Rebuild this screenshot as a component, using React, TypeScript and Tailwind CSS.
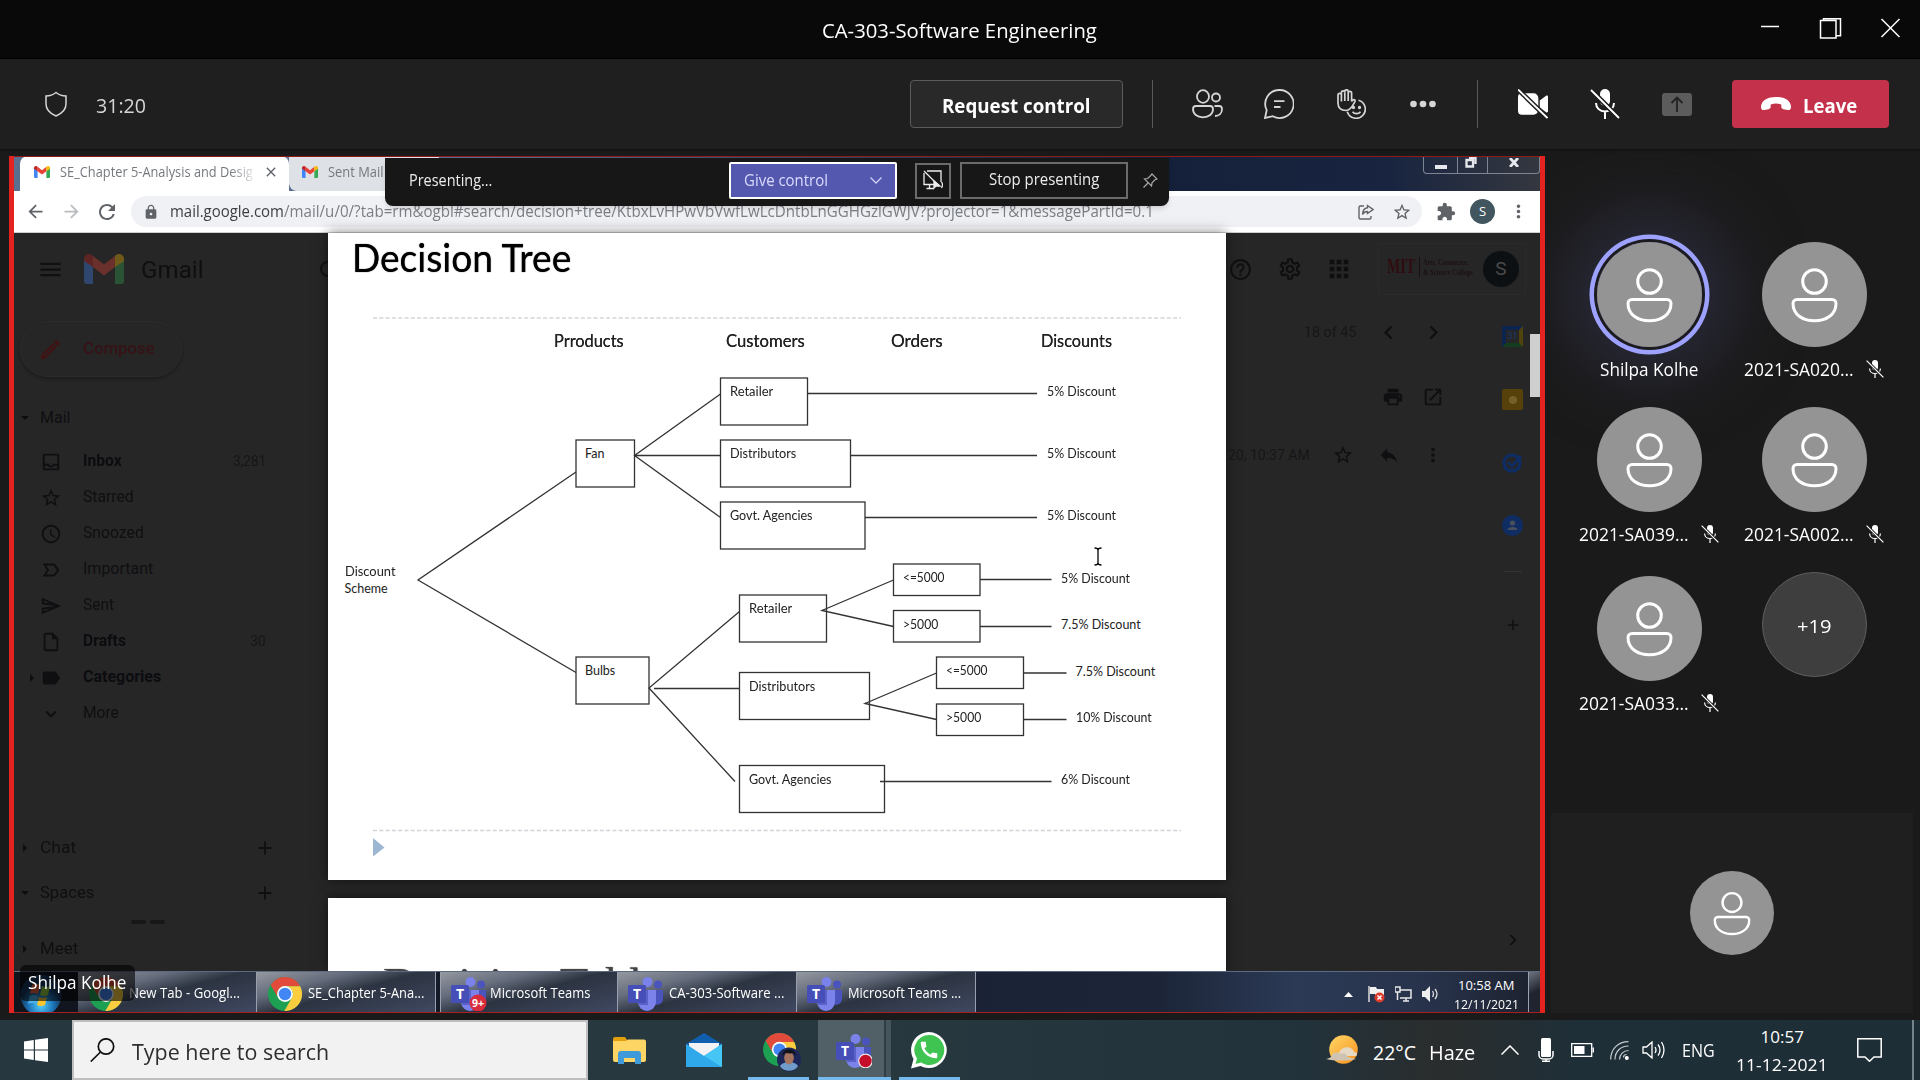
import { useLayoutEffect, useRef, useState } from "react";
import type { ReactNode } from "react";
import {
  MdAccessTime, MdAdd, MdApps, MdArrowBack, MdArrowForward, MdCall, MdChevronLeft, MdChevronRight, MdClose,
  MdExpandMore, MdExtension, MdHelpOutline, MdLabel, MdLabelImportantOutline, MdLock, MdMenu,
  MdMoreVert, MdOpenInNew, MdOutlineEdit, MdOutlineInbox, MdOutlineInsertDriveFile, MdOutlineSend, MdOutlineSettings,
  MdPrint, MdRefresh, MdReply, MdStarBorder,
} from "react-icons/md";

/* One line of text squeezed or stretched to an exact width. */
function Fit({ w, className = "", children }: { w: number; className?: string; children: ReactNode }) {
  const ref = useRef<HTMLSpanElement>(null);
  const [k, setK] = useState(1);
  useLayoutEffect(() => {
    if (ref.current && ref.current.offsetWidth) setK(w / ref.current.offsetWidth);
  }, [w]);
  return (
    <span className={`block shrink-0 text-left leading-[1.3] ${className}`} style={{ width: w }}>
      <span ref={ref} className="inline-block origin-left whitespace-nowrap" style={{ transform: `scaleX(${k})` }}>
        {children}
      </span>
    </span>
  );
}

function Person({ className }: { className: string }) {
  return (
    <svg viewBox="0 0 105 105" className={className} fill="none" stroke="#fff" strokeWidth="3">
      <circle cx="52.5" cy="52.5" r="52.5" fill="#949494" stroke="none" />
      <ellipse cx="52.5" cy="39.5" rx="11.8" ry="11.8" />
      <path d="M35 57.5h35a4 4 0 0 1 4 4c0 11-9.5 17.3-21.5 17.3S31 72.500 31 61.500a4 4 0 0 1 4-4z" />
    </svg>
  );
}

function MicOff({ className }: { className: string }) {
  return (
    <svg viewBox="0 0 30 30" className={className} fill="none" stroke="currentColor" strokeWidth="2">
      <path d="M10 5a5 5 0 0 1 10 0v7a5 5 0 0 1-10 0z" fill="currentColor" stroke="none" />
      <path d="M6 14c0 5 4 8.500 9 8.500s9-3.500 9-8.500M15 22.500V30" />
      <path d="M1 1l28 28" stroke="#1b1b1b" strokeWidth="5" />
      <path d="M1 1l28 28" />
    </svg>
  );
}

function Chrome({ className }: { className: string }) {
  return (
    <svg viewBox="0 0 24 24" className={className}>
      <circle cx="12" cy="12" r="12" fill="#1ea053" />
      <path d="M1.900 5.600A12 12 0 0 1 22.700 6.500L12 6.500A5.500 5.500 0 0 0 7.200 14.750Z" fill="#e24b3b" />
      <path d="M22.700 6.500A12 12 0 0 1 11.500 24L16.760 14.750A5.500 5.500 0 0 0 12 6.500Z" fill="#fccd3f" />
      <circle cx="12" cy="12" r="5.600" fill="#fff" />
      <circle cx="12" cy="12" r="4.400" fill="#4285f4" />
    </svg>
  );
}

function Teams({ className, children }: { className: string; children?: ReactNode }) {
  return (
    <svg viewBox="0 0 36 34" className={className}>
      <circle cx="30" cy="7.500" r="4" fill="#4b53bc" />
      <path d="M24 13h11v9a6 6 0 0 1-11 3z" fill="#4b53bc" />
      <circle cx="19.500" cy="5" r="5" fill="#7b83eb" />
      <path d="M10 13h18v12a9 9 0 0 1-18 0z" fill="#7b83eb" />
      <path d="M10 13h10v15H11z" fill="#5a62c8" />
      <rect y="8" width="18" height="18" rx="1.500" fill="#464eb8" />
      <text x="9" y="22" textAnchor="middle" fontFamily="Open Sans, sans-serif" fontWeight="700" fontSize="14" fill="#fff">T</text>
      {children}
    </svg>
  );
}

function GmailM({ className }: { className: string }) {
  return (
    <svg viewBox="0 0 40 30" className={className}>
      <path d="M0 5l9 7v18H3a3 3 0 0 1-3-3z" fill="#4285f4" />
      <path d="M40 5l-9 7v18h6a3 3 0 0 0 3-3z" fill="#34a853" />
      <path d="M9 2l11 8.500L31 2v11l-11 8.500L9 13z" fill="#ea4335" />
      <path d="M31 2c4-4 9-1 9 3v2l-9 6z" fill="#fbbc04" />
      <path d="M9 2C5-2 0 1 0 5v2l9 6z" fill="#c5221f" />
    </svg>
  );
}

function TitleBar() {
  return (
    <div className="flex h-[59px] items-center border-b border-black bg-[#090909]">
      <div className="w-[822px]" />
      <Fit w={275} className="mt-[3px] text-[20px] text-white">CA-303-Software Engineering</Fit>
      <svg className="ml-[664px] h-[22px] w-[139px]" viewBox="0 0 139 22" fill="none" stroke="#fff" strokeWidth="1.5">
        <path d="M0 8.500h18" />
        <path d="M59.500 2.500h15.500v17.500h-15.500zM62.500 2.500V.8h17v17h-4" />
        <path d="M120.500 1l18 18M138.500 1l-18 18" />
      </svg>
    </div>
  );
}

function Toolbar() {
  return (
    <div className="flex h-[90px] items-center bg-[#1f1f1f] text-[#d6d6d6] shadow-[0_1px_3px_#0006]">
      <svg className="ml-[44px] h-[26px] w-[24px]" viewBox="0 0 24 26" fill="none" stroke="currentColor" strokeWidth="1.500">
        <path d="M12 1.500c3 2.400 6 3.400 10 3.500v8c0 6-4 9.500-10 12C6 22.500 2 19 2 13V5c4-.1 7-1.100 10-3.500z" />
      </svg>
      <Fit w={50} className="mt-1 ml-[28px] text-[20px]">31:20</Fit>
      <div className="ml-[764px] flex h-12 w-[213px] items-center justify-center rounded border border-[#5c5c5c] bg-[#292929] pt-[3px]">
        <Fit w={149} className="text-[20px] font-bold text-white">Request control</Fit>
      </div>
      <div className="ml-[29px] h-12 w-px bg-[#5a5a5a]" />
      <svg className="ml-[39px] h-[30px] w-[31px]" viewBox="0 0 31 30" fill="none" stroke="currentColor" strokeWidth="1.800">
        <ellipse cx="11" cy="7.500" rx="6" ry="6.300" />
        <ellipse cx="24" cy="8.500" rx="4" ry="4" />
        <path d="M4 17h14a3 3 0 0 1 3 3c0 5-4 8.300-10 8.300S1 25 1 20a3 3 0 0 1 3-3zM22.500 17H27a3 3 0 0 1 3 3c0 4.500-3 7-7 7" />
      </svg>
      <svg className="ml-[41px] h-[30px] w-[30px]" viewBox="0 0 30 30" fill="none" stroke="currentColor" strokeWidth="1.800">
        <path d="M15.300 1A14 14 0 1 1 8.800 27.200L1 29l1.700-7.800A14 14 0 0 1 15.300 1zM10 12.200h10.500M10 18h6.500" />
      </svg>
      <svg className="ml-[43px] h-[30px] w-[29px]" viewBox="0 0 29 30" fill="none" stroke="currentColor" strokeWidth="1.700">
        <path d="M1 14V6a1.700 1.700 0 0 1 3.400 0V3.500a1.700 1.700 0 0 1 3.400 0V2.500a1.700 1.700 0 0 1 3.400 0V4a1.700 1.700 0 0 1 3.400 0V12.500C15.500 10.500 18.500 9.500 18 12.500C16 15 15 21 9 21.500C4 21.500 1 19 1 14z" />
        <path d="M4.400 6v6.500M7.800 3.500v8.500M11.200 4v8" />
        <path d="M21.500 11.200A9.200 9.200 0 1 1 10.300 22.800" />
        <circle cx="16.500" cy="18.500" r=".8" fill="currentColor" /><circle cx="22.500" cy="18.500" r=".8" fill="currentColor" />
        <path d="M15.500 22.800c2 2.500 6 2.500 8 0" />
      </svg>
      <svg className="ml-[44px] h-[8px] w-[26px]" viewBox="0 0 26 8" fill="currentColor">
        <circle cx="3.500" cy="4" r="3.300" /><circle cx="13" cy="4" r="3.300" /><circle cx="22.500" cy="4" r="3.300" />
      </svg>
      <div className="ml-[41px] h-12 w-px bg-[#5a5a5a]" />
      <svg className="ml-[40px] h-[30px] w-[30px] text-white" viewBox="0 0 31 30">
        <path d="M4 4h12a5 5 0 0 1 5 5v12a5 5 0 0 1-5 5H4a4 4 0 0 1-4-4V8a4 4 0 0 1 4-4zM22.500 11.500L29 6.500c1-.6 2 0 2 1v15c0 1-1 1.600-2 1l-6.500-5z" fill="currentColor" />
        <path d="M0 0l31 30" stroke="#1f1f1f" strokeWidth="5" /><path d="M0 0l30.500 29.500" stroke="currentColor" strokeWidth="2" />
      </svg>
      <MicOff className="ml-[42px] h-[30px] w-[30px] text-white" />
      <svg className="ml-[42px] h-[23px] w-[30px]" viewBox="0 0 30 23">
        <rect width="30" height="23" rx="3" fill="#5c5c5c" />
        <path d="M15 19V5M9.500 10L15 4.500 20.500 10" fill="none" stroke="#232323" strokeWidth="1.800" />
      </svg>
      <div className="ml-[40px] flex h-12 w-[157px] items-center rounded bg-[#c4314b] pl-[29px]">
        <svg className="h-[14px] w-[30px]" viewBox="0 0 30 14">
          <path d="M0 9C1 3 7 0 15 0s14 3 15 9c.3 3-1 4.500-3.500 4l-4-.8c-1.500-.3-2.200-1.200-2.200-2.600V7.500c-3.500-1.200-7-1.200-10.600 0v2c0 1.500-.7 2.400-2.200 2.700l-4 .8C1 13.500-.3 12 0 9z" fill="#fff" />
        </svg>
        <Fit w={54} className="mt-1 ml-3 text-[20px] font-bold text-white">Leave</Fit>
      </div>
    </div>
  );
}

function PresentingBar() {
  return (
    <div className="absolute top-[2px] left-[371px] flex h-12 w-[784px] items-center rounded-b-lg bg-[#171717] pb-[3px] text-[#ececec] shadow-md">
      <Fit w={83} className="ml-6 text-[16px]">Presenting...</Fit>
      <div className="ml-[237px] flex h-[37px] w-[168px] items-center rounded-[2px] border-[2.500px] border-white bg-[#5558af]">
        <Fit w={84} className="ml-[13px] text-[15.500px] text-[#dadcff]">Give control</Fit>
        <svg className="ml-[42px] h-[7px] w-[12px]" viewBox="0 0 12 7" fill="none" stroke="#d0d2f5" strokeWidth="1.300"><path d="M.5.500L6 6l5.500-5.500" /></svg>
      </div>
      <div className="ml-[18px] flex h-9 w-9 items-center justify-center border-2 border-[#6b6b6b] pb-px">
        <svg className="h-[20px] w-[20px]" viewBox="0 0 20 20" fill="none" stroke="#eee" strokeWidth="1.300">
          <path d="M4 1h14v11M1 3v11.500h10M3.500 18.500H11M1 1l15 15M6.500 15v3.500M18.500 12q2 3 0 6" /><path d="M11 11v7l2-2h4z" fill="#eee" />
        </svg>
      </div>
      <div className="ml-[9px] flex h-[37px] w-[168px] items-center justify-center border-2 border-[#6b6b6b] pb-[2px]">
        <Fit w={110} className="text-[15.500px]">Stop presenting</Fit>
      </div>
      <svg className="ml-[15px] h-[15px] w-[15px]" viewBox="0 0 15 15" fill="none" stroke="#a8a8a8" strokeWidth="1.200">
        <path d="M9 1l5 5-2 .8-3 3-.5 3.200-7-7L4.700 5.500l3-3zM5 10l-4.500 4.500" />
      </svg>
    </div>
  );
}

function BrowserChrome() {
  return (
    <>
      <div className="flex h-[35px] bg-[linear-gradient(90deg,#5a6f8f_0,#5a6f8f_30%,#14203a_74%,#17233d_82%,#182440_90%,#34373f_100%)]">
        <div className="ml-[6px] flex w-[269px] items-center rounded-t-lg bg-white pb-[3px]">
          <GmailM className="ml-[14px] h-[12px] w-[16px]" />
          <div className="ml-[10px] [mask-image:linear-gradient(90deg,#000_88%,#0003)]">
            <Fit w={193} className="text-[15px] text-[#75797f]">SE_Chapter 5-Analysis and Desig</Fit>
          </div>
          <MdClose className="ml-[10px] text-[16px] text-[#5f6368]" />
        </div>
        <div className="flex w-[150px] items-center rounded-bl-lg bg-[#dee1e6] pb-[3px]">
          <GmailM className="ml-[13px] h-[12px] w-[16px]" />
          <Fit w={56} className="ml-[10px] text-[15px] text-[#75797f]">Sent Mail</Fit>
        </div>
        <div className="ml-auto flex h-[18px] w-[117px] rounded-b border border-t-0 border-[#7d8494] text-white">
          <div className="flex w-[34px] items-center justify-center border-r border-[#7d8494]"><div className="mt-1 h-1 w-3 bg-[#e6e8ee]" /></div>
          <div className="flex w-[30px] items-start justify-center border-r border-[#7d8494]">
            <svg className="mr-1 h-3 w-3" viewBox="0 0 12 12" fill="none" stroke="#e6e8ee" strokeWidth="2.300"><path d="M1.500 4h6.500v6.500H1.500zM4 1.500h6.500v6.500" /></svg>
          </div>
          <div className="flex flex-1 items-center justify-center pb-1">
            <svg className="h-[9px] w-[10px]" viewBox="0 0 10 9" stroke="#e6e8ee" strokeWidth="2.800"><path d="M1 0l8 9M9 0L1 9" /></svg>
          </div>
        </div>
      </div>
      <div className="flex h-[42px] items-center border-b border-[#cfcfd2] bg-white text-[#5f6368]">
        <MdArrowBack className="ml-[11px] text-[21px]" />
        <MdArrowForward className="ml-[15px] text-[21px] text-[#b9bbbe]" />
        <MdRefresh className="ml-[13px] text-[24px]" />
        <div className="ml-[12px] flex h-[31px] w-[1291px] items-center rounded-full bg-[#f0f1f4]">
          <MdLock className="ml-[12px] text-[16px]" />
          <Fit w={114} className="ml-[11px] text-[16px] text-[#3b3e43]">mail.google.com</Fit>
          <Fit w={870} className="text-[16px] text-[#7b7f85]">/mail/u/0/?tab=rm&amp;ogbl#search/decision+tree/KtbxLvHPwVbVwfLwLcDntbLnGGHGzlGWJV?projector=1&amp;messagePartId=0.1</Fit>
          <svg className="ml-[204px] h-4 w-4" viewBox="0 0 16 16" fill="none" stroke="currentColor" strokeWidth="1.400">
            <path d="M6 2H2.500A1.500 1.500 0 0 0 1 3.500v10A1.500 1.500 0 0 0 2.500 15h9a1.500 1.500 0 0 0 1.500-1.500V12M9.500 1.500l5.500 4-5.500 4V7.500c-2.500 0-4 1-5 3 .2-4 2-6.400 5-6.700z" />
          </svg>
          <MdStarBorder className="ml-[18px] text-[20px]" />
        </div>
        <MdExtension className="ml-[14px] text-[20px]" />
        <div className="ml-[14px] flex size-[25px] items-center justify-center rounded-full bg-[#41565f] text-[13px] text-white">S</div>
        <MdMoreVert className="ml-[13px] text-[21px]" />
      </div>
    </>
  );
}

const folders: { label: string; w: number; icon: ReactNode; bold?: boolean; count?: string; cw?: number; arrow?: boolean }[] = [
  { label: "Inbox", w: 39, icon: <MdOutlineInbox />, bold: true, count: "3,281", cw: 33 },
  { label: "Starred", w: 51, icon: <MdStarBorder /> },
  { label: "Snoozed", w: 61, icon: <MdAccessTime /> },
  { label: "Important", w: 70, icon: <MdLabelImportantOutline /> },
  { label: "Sent", w: 31, icon: <MdOutlineSend /> },
  { label: "Drafts", w: 43, icon: <MdOutlineInsertDriveFile />, bold: true, count: "30", cw: 16 },
  { label: "Categories", w: 78, icon: <MdLabel />, bold: true, arrow: true },
  { label: "More", w: 36, icon: <MdExpandMore /> },
];

function Caret({ down = false, className = "" }: { down?: boolean; className?: string }) {
  return (
    <svg className={`h-2 w-2 shrink-0 ${className}`} viewBox="0 0 8 8" fill="#0d0d0f">
      <path d={down ? "M0 2h8L4 6z" : "M2 0v8l4-4z"} />
    </svg>
  );
}

function Section({ label, w, down, plus, className }: { label: string; w: number; down?: boolean; plus?: boolean; className: string }) {
  return (
    <div className={`flex items-center ${className}`}>
      <Caret down={down} className="ml-[7px]" />
      <Fit w={w} className="ml-[11px] text-[16px] text-[#0f0f12]">{label}</Fit>
      {plus && <MdAdd className="mr-[52px] ml-auto text-[22px] text-[#0f0f12]" />}
    </div>
  );
}

function GmailLeft() {
  return (
    <div className="flex w-[314px] flex-col overflow-hidden [font-family:Roboto,sans-serif]">
      <div className="flex h-[72px] items-center">
        <MdMenu className="ml-[23px] text-[27px] text-[#101012]" />
        <GmailM className="ml-[20px] h-[30px] w-[40px] opacity-35" />
        <Fit w={63} className="mt-[3px] ml-[17px] text-[23px] text-[#0f0f11]">Gmail</Fit>
        <div className="ml-auto size-4 translate-x-2 rounded-full border-2 border-[#111]" />
      </div>
      <div className="mt-4 ml-[6px] flex h-14 w-[162px] items-center rounded-full border border-[#2b2b2b] shadow-[0_2px_3px_#1c1c1c]">
        <MdOutlineEdit className="ml-[17px] text-[25px] text-[#421213]" />
        <Fit w={71} className="ml-[20px] text-[16px] font-medium text-[#371216]">Compose</Fit>
      </div>
      <Section label="Mail" w={30} down className="mt-[23px] h-9" />
      <div className="mt-[7px]">
        {folders.map((f) => (
          <div key={f.label} className="flex h-9 items-center pt-px text-[#0f0f12]">
            <div className="flex w-[26px] justify-end pr-1">{f.arrow && <Caret />}</div>
            <div className="w-[43px] text-[22px]">{f.icon}</div>
            <Fit w={f.w} className={f.bold ? "text-[16px] font-bold text-[#0c0c10]" : "text-[16px]"}>{f.label}</Fit>
            {f.count && <Fit w={f.cw ?? 20} className="mr-[62px] ml-auto text-[14px] text-[#161618]">{f.count}</Fit>}
          </div>
        ))}
      </div>
      <Section label="Chat" w={36} plus className="mt-[95px] h-11" />
      <Section label="Spaces" w={54} down plus className="h-[46px]" />
      <div className="flex h-[11px] items-center gap-1 pl-[117px]">
        <div className="h-1 w-[15px] rounded-full bg-[#171717]" /><div className="h-1 w-[15px] rounded-full bg-[#171717]" />
      </div>
      <Section label="Meet" w={38} className="h-11" />
    </div>
  );
}

function GmailRight() {
  return (
    <div className="relative flex w-[314px] flex-col overflow-hidden text-[#0f0f11] [font-family:Roboto,sans-serif]">
      <div className="flex h-[72px] items-center">
        <MdHelpOutline className="ml-[2px] text-[25px]" />
        <MdOutlineSettings className="ml-[24px] text-[26px]" />
        <MdApps className="ml-[22px] text-[28px]" />
        <div className="ml-[25px] flex h-[52px] w-[148px] items-center border border-[#2a2a2a]">
          <Fit w={28} className="mb-1 ml-2 [font-family:'Liberation_Serif',serif] text-[21px] font-bold text-[#2f0c10]">MIT</Fit>
          <div className="mb-1 ml-[4px] border-l border-[#1a1012] pl-[3px] [font-family:'Liberation_Serif',serif] text-[#1e1012]">
            <Fit w={46} className="text-[9px] leading-[10px] font-bold">Arts, Commerce,</Fit>
            <Fit w={50} className="text-[9px] leading-[10px] font-bold">&amp; Science College</Fit>
          </div>
          <div className="ml-[10px] flex size-[36px] items-center justify-center rounded-full bg-[#0d1013] text-[19px] text-[#4a4a4a]">S</div>
        </div>
      </div>
      <div className="flex">
        <div className="w-[260px]">
          <div className="flex h-[54px] items-center">
            <Fit w={52} className="ml-[78px] text-[14px] text-[#161618]">18 of 45</Fit>
            <MdChevronLeft className="ml-[19px] text-[27px]" />
            <MdChevronRight className="ml-[18px] text-[27px]" />
          </div>
          <div className="flex h-[76px] items-center">
            <MdPrint className="ml-[156px] text-[22px]" />
            <MdOpenInNew className="ml-[18px] text-[22px]" />
          </div>
          <div className="flex h-[40px] items-center">
            <Fit w={82} className="ml-[2px] text-[14px] text-[#161618]">20, 10:37 AM</Fit>
            <MdStarBorder className="ml-[22px] text-[22px]" />
            <MdReply className="ml-[24px] text-[22px]" />
            <MdMoreVert className="ml-[22px] text-[22px]" />
          </div>
        </div>
        <div className="flex w-[53px] flex-col items-center">
          <div className="mt-[21px] flex h-[21px] w-[21px] items-center justify-center border-4 border-[#0d2350] border-b-[#143c1e] border-r-[#51430e] text-[9px] text-[#1b3a78]">31</div>
          <div className="mt-[42px] flex size-[21px] items-center justify-center rounded-[2px] bg-[#554109]"><div className="size-2 rounded-full bg-[#775f2c]" /></div>
          <svg className="mt-[42px] size-[21px]" viewBox="0 0 21 21" fill="none" stroke="#0f2d63" strokeWidth="3.500"><circle cx="10" cy="11" r="8" /><path d="M6 10l4 4 9-10" strokeWidth="3" /></svg>
          <svg className="mt-[42px] size-[21px]" viewBox="0 0 21 21"><circle cx="10.500" cy="10.500" r="10.500" fill="#0f2d63" /><circle cx="10.500" cy="8" r="2.600" fill="#4a4f5c" /><path d="M5.500 15c0-4 10-4 10 0z" fill="#4a4f5c" /></svg>
          <div className="mt-[35px] h-px w-[18px] bg-[#333]" />
          <MdAdd className="mt-[44px] text-[18px]" />
          <MdChevronRight className="mt-[295px] text-[22px]" />
        </div>
      </div>
      <div className="absolute top-[101px] right-0 h-[63px] w-[10px] bg-[#cfcfcf]" />
    </div>
  );
}

/* Diagram coordinates are in screen pixels; the slide starts at (328, 233). */
const SX = 328;
const SY = 233;
const nodes: [string, number, number, number, number, number][] = [
  ["Retailer", 43.5, 720.500, 378, 87, 47],
  ["Distributors", 66, 720.500, 440, 130, 47],
  ["Govt. Agencies", 82.5, 720.500, 502, 144.500, 47],
  ["Fan", 19, 576, 440, 58.500, 47],
  ["Bulbs", 30, 576, 657, 73, 47],
  ["<=5000", 42, 893.500, 564, 86.500, 31.500],
  [">5000", 35, 893.500, 610.500, 86.500, 31.500],
  ["Retailer", 43.5, 739.500, 595, 87, 47],
  ["Distributors", 66, 739.500, 672.500, 130, 47],
  ["<=5000", 42, 936.500, 657, 87, 31.500],
  [">5000", 35, 936.500, 704, 87, 31.500],
  ["Govt. Agencies", 82.5, 739.500, 765.500, 145, 47],
];
const labels: [string, number, number, number][] = [
  ["5% Discount", 69.5, 1046.500, 391.500],
  ["5% Discount", 69.5, 1046.500, 453.500],
  ["5% Discount", 69.5, 1046.500, 515.500],
  ["5% Discount", 69.5, 1061, 578.500],
  ["7.5% Discount", 80, 1061, 624.500],
  ["7.5% Discount", 80, 1075.500, 671.500],
  ["10% Discount", 76, 1075.500, 717.500],
  ["6% Discount", 69.5, 1061, 779.500],
  ["Discount", 50.5, 344.500, 571.500],
  ["Scheme", 43, 344.500, 588.500],
];
const heads: [string, number, number][] = [
  ["Prroducts", 69.5, 554],
  ["Customers", 79, 726],
  ["Orders", 52, 891],
  ["Discounts", 71, 1040.500],
];
const links =
  "M576 472L418 580L576 672.500M720.500 394L634.500 455.500L720.500 517.500M634.500 455.500H720.500M807.500 393.500H1037M850.500 455.500H1037M865 517.500H1037" +
  "M739.500 611.500L649 688L735 781.500M654 688.500H739.500M893.500 580L822 610.500L893.500 626.500M936.500 673L865 703.500L936.500 719.500" +
  "M980 579.500H1051.500M980 626.500H1051.500M1023.500 673H1066.500M1023.500 719.500H1066.500M880 781.500H1051.500";

function Slide() {
  return (
    <div className="relative h-[647px] overflow-hidden bg-white text-[#222] shadow-[0_0_12px_#0008] [font-family:Lato,sans-serif]">
      <svg className="absolute inset-0 h-[647px] w-[898px]" viewBox="328 233 898 647" fill="none" stroke="#333" strokeWidth="1.300">
        <path d={links} />
        {nodes.map(([t, , x, y, w, h], i) => <rect key={t + i} x={x} y={y} width={w} height={h} />)}
        <path d="M373 318H1181M373 830.500H1181" stroke="#d3d3da" strokeDasharray="4 2.300" strokeWidth="1.700" />
        <path d="M373 838l11.500 9.500L373 856.500z" fill="#9db6d2" stroke="none" />
        <path d="M1094.500 548q3.500 0 3.500 2q0-2 3.500-2M1098 549.500v14M1094.500 565q3.500 0 3.500-2q0 2 3.500 2" stroke="#000" strokeWidth="1.300" />
      </svg>
      <div className="absolute top-0 left-[24px]"><Fit w={219} className="text-[38px] text-black [text-shadow:0_0_1px_#000]">Decision Tree</Fit></div>
      {heads.map(([t, w, x]) => (
        <div key={t} className="absolute top-[98px]" style={{ left: x - SX }}><Fit w={w} className="text-[16.500px] [text-shadow:0_0_.5px_#222]">{t}</Fit></div>
      ))}
      {nodes.map(([t, w, x, y], i) => (
        <div key={t + i} className="absolute" style={{ left: x - SX + 9, top: y - SY + 6 }}><Fit w={w} className="text-[12.500px]">{t}</Fit></div>
      ))}
      {labels.map(([t, w, x, y], i) => (
        <div key={t + i} className="absolute" style={{ left: x - SX, top: y - SY - 8 }}><Fit w={w} className="text-[12.500px]">{t}</Fit></div>
      ))}
    </div>
  );
}

const w7: { icon: "chrome" | "teams"; label: string; w: number; badge?: boolean; gap?: boolean }[] = [
  { icon: "chrome", label: "New Tab - Googl...", w: 111 },
  { icon: "chrome", label: "SE_Chapter 5-Ana...", w: 116 },
  { icon: "teams", label: "Microsoft Teams", w: 100, badge: true, gap: true },
  { icon: "teams", label: "CA-303-Software ...", w: 115 },
  { icon: "teams", label: "Microsoft Teams ...", w: 113 },
];

function RemoteTaskbar() {
  return (
    <div className="flex h-[42px] overflow-hidden border-t border-[#5d6a80] bg-[linear-gradient(90deg,#10141d_0,#1b2236_60%,#1c2538_75%,#2c3a56_84%,#27324a_93%,#1c212d_100%)] text-white">
      <svg className="mt-[2px] ml-[6px] h-[42px] w-[42px] shrink-0" viewBox="0 0 42 42">
        <defs><radialGradient id="orb" cy=".75"><stop offset="0" stopColor="#4fd0ff" /><stop offset=".6" stopColor="#1d74b8" /><stop offset="1" stopColor="#17395c" /></radialGradient></defs>
        <circle cx="21" cy="21" r="20.500" fill="url(#orb)" />
        <path d="M12 11q4-2 8 0l-2 9q-4-2-8 0z" fill="#e8603a" /><path d="M22 12q4 2 8 0l-2 9q-4 2-8 0z" fill="#93c83d" />
        <path d="M10 22q4-2 8 0l-2 8q-4-2-8 0z" fill="#4cb1ea" /><path d="M19 23q4 2 8 0l-2 8q-4 2-8 0z" fill="#fdc52e" />
      </svg>
      <div className="flex w-[914px] shrink-0 pl-4">
        {w7.map((b, i) => (
          <div key={i} className={`flex w-[179px] items-center border-r border-[#98a0b0] bg-[linear-gradient(165deg,#9498a0_0,#666d7c_28%,#2c3341_50%,#3f4961_100%)] pt-[2px] ${b.gap ? "ml-1 border-l" : ""}`}>
            {b.icon === "chrome" ? <Chrome className="ml-[11px] h-[34px] w-[34px] shrink-0" /> : (
              <Teams className="ml-[10px] h-[34px] w-[36px] shrink-0">
                {b.badge && (<><circle cx="27" cy="26" r="8.500" fill="#d92c3c" /><text x="27" y="30" textAnchor="middle" fontSize="10.500" fontWeight="700" fill="#fff" fontFamily="Open Sans, sans-serif">9+</text></>)}
              </Teams>
            )}
            <Fit w={b.w} className={b.icon === "chrome" ? "ml-[6px] text-[14px]" : b.badge ? "ml-[3px] text-[14px]" : "ml-[5px] text-[14px]"}>{b.label}</Fit>
          </div>
        ))}
      </div>
      <div className="ml-[368px] flex items-center pt-[3px]">
        <svg className="h-[5px] w-[9px]" viewBox="0 0 9 5"><path d="M4.500 0L9 5H0z" fill="#fff" /></svg>
        <svg className="ml-[15px] h-[18px] w-[17px]" viewBox="0 0 17 18"><path d="M1 1v16" stroke="#ddd" strokeWidth="1.500" /><path d="M2 2h6l1 2h7v7H8L7 9H2z" fill="#f0f0f0" /><circle cx="11.500" cy="12.500" r="5" fill="#dd3b2c" /><path d="M9.500 10.500l4 4m0-4l-4 4" stroke="#fff" strokeWidth="1.500" /></svg>
        <svg className="ml-[10px] h-[16px] w-[17px]" viewBox="0 0 17 16" fill="none" stroke="#e8e8e8" strokeWidth="1.500"><path d="M5 4h11v8H5M8 15h6M11 12v3M0 1h5v5H0zM2.500 6v8" /></svg>
        <svg className="ml-[10px] h-[16px] w-[17px]" viewBox="0 0 17 16"><path d="M0 5h3l5-5v16l-5-5H0z" fill="#eee" /><path d="M10.500 5q2 3 0 6M13 3q4 5 0 10" fill="none" stroke="#ddd" strokeWidth="1.300" /></svg>
      </div>
      <div className="ml-[14px] flex w-[66px] flex-col items-center pt-[4px]">
        <Fit w={56} className="text-[13px] leading-[19px]">10:58 AM</Fit>
        <Fit w={65} className="text-[13px] leading-[19px]">12/11/2021</Fit>
      </div>
      <div className="ml-auto w-[12px] border-l border-[#9aa3b3] bg-[linear-gradient(150deg,#6d737f,#20242e_50%)]" />
    </div>
  );
}

function SharedScreen() {
  return (
    <div className="relative mt-[7px] ml-[9px] flex h-[857px] w-[1536px] flex-col border-x-[5px] border-[#e32320]">
      <BrowserChrome />
      <div className="flex h-[738px] bg-[#262626]">
        <GmailLeft />
        <div className="flex w-[898px] flex-col gap-[18px]">
          <Slide />
          <div className="h-[73px] overflow-hidden bg-white pt-[58px] pl-[55px] shadow-[0_0_12px_#0008]">
            <Fit w={280} className="[font-family:'Liberation_Serif',serif] text-[42px] text-[#444] [text-shadow:0_0_1px_#444]">Decision Table</Fit>
          </div>
        </div>
        <GmailRight />
      </div>
      <RemoteTaskbar />
      <PresentingBar />
      <div className="absolute inset-x-0 top-0 h-px bg-[#8e1a1a]" />
      <div className="absolute inset-x-0 bottom-0 h-px bg-[#a81f22]" />
      <div className="absolute bottom-[12px] left-[6px] flex h-9 w-[115px] items-center rounded-md bg-black/60 pb-px pl-2">
        <Fit w={98} className="text-[17.500px] text-white">Shilpa Kolhe</Fit>
      </div>
    </div>
  );
}

function Participant({ name, speaking = false }: { name: string; speaking?: boolean }) {
  return (
    <div className="flex w-[165px] flex-col items-center">
      <div className={speaking ? "rounded-full shadow-[0_0_0_3px_#1b1b20,0_0_0_7.500px_#9ea2ff,0_0_70px_30px_#2b2b3c]" : "rounded-full"}>
        <Person className="h-[105px] w-[105px]" />
      </div>
      <div className="mt-[10px] mr-[2px] flex h-6 items-center justify-center gap-3 text-white">
        <Fit w={speaking ? 98 : 109.5} className="text-[17.500px]">{name}</Fit>
        {!speaking && <MicOff className="-mr-px h-[18px] w-[18px]" />}
      </div>
    </div>
  );
}

function Roster() {
  return (
    <div className="flex h-[871px] w-[375px] flex-col overflow-hidden">
      <div className="ml-[22px] flex pt-[93px]">
        <Participant name="Shilpa Kolhe" speaking />
        <Participant name="2021-SA020..." />
      </div>
      <div className="relative mt-[26px] ml-[22px] flex">
        <Participant name="2021-SA039..." />
        <Participant name="2021-SA002..." />
      </div>
      <div className="mt-[26px] ml-[22px] flex">
        <div className="mt-1"><Participant name="2021-SA033..." /></div>
        <div className="ml-[30px] flex size-[105px] items-center justify-center rounded-full border border-[#5e5e5e] bg-[#3e3e3e] pt-[3px]">
          <Fit w={35} className="text-[19px] text-white">+19</Fit>
        </div>
      </div>
      <div className="mt-auto mb-[7px] ml-[6px] flex h-[200px] w-[362px] items-center justify-center bg-[#1f1f1f]">
        <Person className="h-[84px] w-[84px]" />
      </div>
    </div>
  );
}

function Taskbar() {
  return (
    <div className="flex h-[60px] bg-[linear-gradient(90deg,#26373f_0,#28383f_45%,#22323b_68%,#2a2d2d_75%,#1f2f38_82%,#1e2e36_100%)] text-white">
      <div className="flex w-[72px] items-center justify-center">
        <svg className="h-6 w-6" viewBox="0 0 24 24" fill="#fff"><path d="M0 3.400l9.800-1.400v9.500H0zM11 1.800L24 0v11.500H11zM0 12.500h9.800V22L0 20.600zM11 12.500h13V24l-13-1.800z" /></svg>
      </div>
      <div className="flex w-[516px] items-center border-2 border-[#bfbfc1] bg-[#f2f2f2]">
        <svg className="ml-4 h-6 w-[25px]" viewBox="0 0 25 24" fill="none" stroke="#111" strokeWidth="1.700"><circle cx="16" cy="8.500" r="7.700" /><path d="M10.500 14L.8 23.500" /></svg>
        <Fit w={197} className="mt-[5px] ml-[17px] text-[21px] text-[#2d2d2d]">Type here to search</Fit>
      </div>
      <div className="flex w-[82px] items-center justify-center">
        <svg className="h-[27px] w-[33px]" viewBox="0 0 33 27"><path d="M0 2a2 2 0 0 1 2-2h10l3 4H0z" fill="#e29f0c" /><path d="M0 4h13l2-1.500h16a2 2 0 0 1 2 2V23a2 2 0 0 1-2 2H2a2 2 0 0 1-2-2z" fill="#fdd564" /><path d="M5 27V17a3 3 0 0 1 3-3h17a3 3 0 0 1 3 3v10h-6v-6H11v6z" fill="#3e9ad9" /></svg>
      </div>
      <div className="flex w-[68px] items-center justify-center">
        <svg className="h-[34px] w-[36px]" viewBox="0 0 36 34"><path d="M0 11L18 0l18 11v3H0z" fill="#0f5fae" /><path d="M3 10h30v9L18 24 3 19z" fill="#f2f2f4" /><path d="M0 11l18 12L36 11v23H0z" fill="#2fa9ea" /><path d="M36 11v23L12 19l6 4z" fill="#45c6f5" /></svg>
      </div>
      <div className="flex w-[80px] flex-col items-center justify-end">
        <svg className="mb-[5px] ml-[10px] h-[40px] w-[40px]" viewBox="0 0 40 40">
          <svg x="0" y="1" width="33" height="33" viewBox="0 0 24 24"><Chrome className="" /></svg>
          <circle cx="26" cy="27.500" r="12" fill="#1d2757" />
          <path d="M17 34.500c2-6 16-6 18 0a11.500 11.500 0 0 1-18 0z" fill="#6f9ccb" />
          <ellipse cx="26" cy="26" rx="4.800" ry="6.500" fill="#a5745e" />
          <path d="M19.500 24c-1-8 14-9 13 0l-2-3c-3 1-6 0-8.500 0z" fill="#10131c" />
        </svg>
        <div className="h-[3px] w-[61px] bg-[#76b9ed]" />
      </div>
      <div className="flex w-[73px] flex-col items-start justify-end bg-[linear-gradient(90deg,#516067_0,#516067_66px,#2f3e46_66px,#2f3e46_68px,#46545b_68px)]">
        <Teams className="mb-[9px] ml-[18px] h-[34px] w-[36px]"><circle cx="29.500" cy="27" r="6.800" fill="#c50f2a" stroke="#e8e8e8" strokeWidth="1.200" /></Teams>
        <div className="h-[3px] w-full bg-[#76b9ed]" />
      </div>
      <div className="flex w-[77px] flex-col items-center justify-end">
        <div className="relative mr-px mb-[8px] h-[37px] w-[36px]">
          <svg className="h-[37px] w-[36px]" viewBox="0 0 36 37"><path d="M18 0a18 18 0 1 1-8.500 34L0 36.500l2.500-9.500A18 18 0 0 1 18 0z" fill="#fff" /><path d="M18 3a15 15 0 1 1-8 27.500l-5.500 1.500 1.500-5.500A15 15 0 0 1 18 3z" fill="#3fc351" /></svg>
          <MdCall className="absolute top-[7px] left-[7px] text-[22px] text-white" />
        </div>
        <div className="h-[3px] w-[61px] bg-[#76b9ed]" />
      </div>
      <div className="ml-[358px] flex items-center">
        <svg className="h-[30px] w-[34px]" viewBox="0 0 34 30"><defs><linearGradient id="sun" x1="0" y1="0" x2="1" y2="1"><stop offset="0" stopColor="#ffd866" /><stop offset="1" stopColor="#f78f1e" /></linearGradient></defs><circle cx="17.500" cy="14.500" r="14.300" fill="url(#sun)" /><path d="M13 19c1-8 13-9 15-2 3 0 4 3 2 4H14z" fill="#e5d9c4" /><path d="M0 24c3-1 5-1 6-4 2-3 6-3 8-1 3-2 7 0 8 3 2 1 6 1 8 2-8 2-22 2-30 0z" fill="#cfc3b2" /></svg>
        <Fit w={43} className="mt-[5px] ml-[13px] text-[19.500px]">22°C</Fit>
        <Fit w={46} className="mt-[5px] ml-[13px] text-[19.500px]">Haze</Fit>
        <svg className="ml-[26px] h-[10px] w-[18px]" viewBox="0 0 18 10" fill="none" stroke="#fff" strokeWidth="1.500"><path d="M.5 9.500L9 1l8.500 8.500" /></svg>
        <svg className="ml-[19px] h-[24px] w-[16px]" viewBox="0 0 16 24" fill="none" stroke="#fff" strokeWidth="1.500"><rect x="3" y="0" width="10" height="19" rx="1.500" fill="#fff" stroke="none" /><path d="M1 13v4a4 4 0 0 0 4 4h6a4 4 0 0 0 4-4v-4M8 21v2M4 23.300h8" /></svg>
        <svg className="ml-[17px] h-[14px] w-[23px]" viewBox="0 0 23 14" fill="none" stroke="#fff" strokeWidth="1.300"><path d="M.7.700h20v12.600H.7zM22.300 4.500v5" /><rect x="3" y="3" width="10.500" height="8" fill="#fff" stroke="none" /></svg>
        <svg className="ml-[16px] h-[19px] w-[19px]" viewBox="0 0 19 19" fill="none" stroke="#fff" strokeWidth="1.200"><path d="M.7 18.500C.7 8 8 .7 18.500.7M5 18.500C5 10.500 10.500 5 18.500 5M9.500 18.500c0-5 4-9 9-9" opacity=".75" /><path d="M13.500 16.500a3 3 0 0 1 3-3" opacity=".75" /><circle cx="16.800" cy="17" r="1.400" fill="#fff" /></svg>
        <svg className="ml-[13px] h-[18px] w-[24px]" viewBox="0 0 24 18" fill="none" stroke="#fff" strokeWidth="1.300"><path d="M1 6h3.500L10 1v16l-5.500-5H1zM13 6q2 3 0 6M16 3.500q4 5.500 0 11M19.500 1q5 8 0 16" /></svg>
        <Fit w={33} className="ml-[16px] text-[17.500px]">ENG</Fit>
      </div>
      <div className="ml-[21px] flex w-[92px] flex-col items-center pt-[3px]">
        <Fit w={43} className="text-[17px] leading-[28px]">10:57</Fit>
        <Fit w={92} className="text-[17px] leading-[28px]">11-12-2021</Fit>
      </div>
      <svg className="mt-[18px] ml-[29px] h-[24px] w-[25px]" viewBox="0 0 25 24" fill="none" stroke="#fff" strokeWidth="1.500"><path d="M.8.800h23.400v18.200h-7.200L12.500 23.300 8 19H.8z" /></svg>
      <div className="ml-[30px] w-[2px] bg-[#75838a]" />
    </div>
  );
}

export default function App() {
  return (
    <div className="flex h-[1080px] w-[1920px] flex-col overflow-hidden bg-[#1a1a1a] [font-family:'Open_Sans','Noto_Sans',sans-serif]">
      <TitleBar />
      <Toolbar />
      <div className="flex h-[871px]">
        <SharedScreen />
        <Roster />
      </div>
      <Taskbar />
    </div>
  );
}
